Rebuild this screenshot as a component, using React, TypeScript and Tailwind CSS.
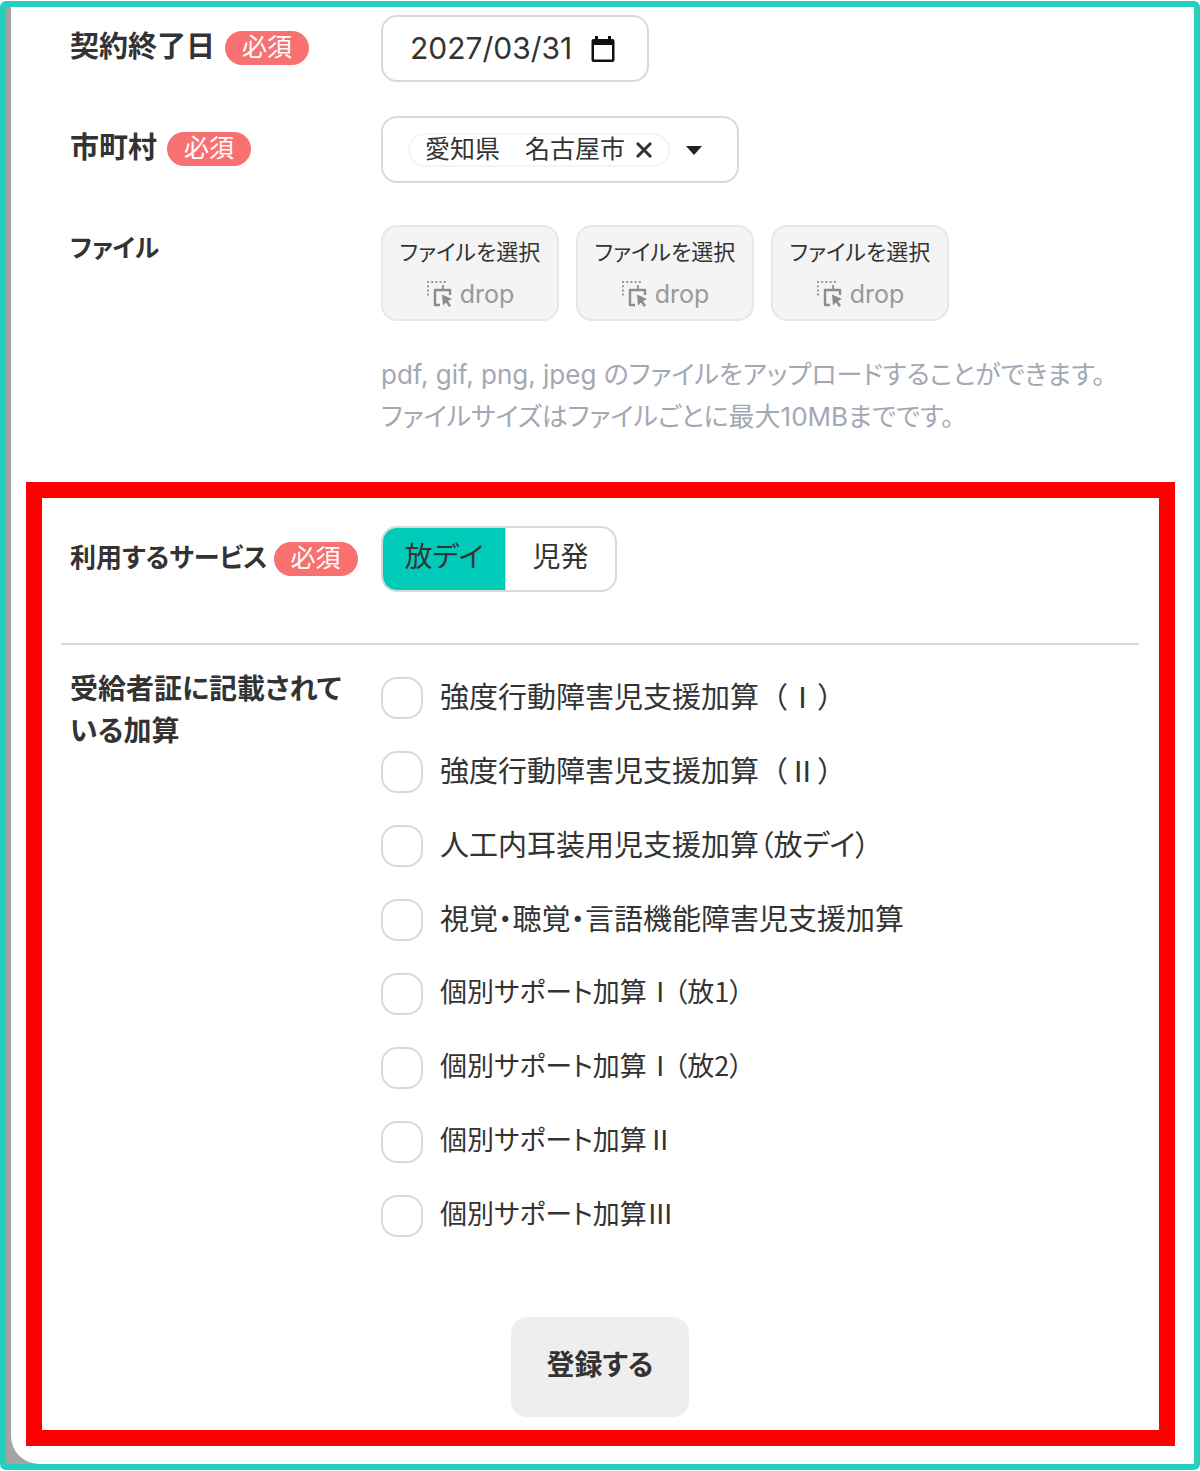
import { useState } from "react";

const additions = [
  { name: "強度行動障害児支援加算（Ⅰ）", style: "text-[29px] [font-feature-settings:normal]" },
  { name: "強度行動障害児支援加算（Ⅱ）", style: "text-[29px] [font-feature-settings:normal]" },
  { name: "人工内耳装用児支援加算（放デイ）", style: "text-[29px]" },
  { name: "視覚・聴覚・言語機能障害児支援加算", style: "text-[29px]" },
  { name: "個別サポート加算Ⅰ（放1）", style: "text-[27px]" },
  { name: "個別サポート加算Ⅰ（放2）", style: "text-[27px]" },
  { name: "個別サポート加算Ⅱ", style: "text-[27px]" },
  { name: "個別サポート加算Ⅲ", style: "text-[27px]" },
];

const services = ["放デイ", "児発"];

function Required() {
  return (
    <span className="flex h-[34px] shrink-0 items-center rounded-full bg-[#f87171] px-[17px] pb-0.5 text-[25px] font-normal whitespace-nowrap text-white">
      必須
    </span>
  );
}

function CalendarIcon() {
  return (
    <svg viewBox="0 0 24 28" className="h-7 w-6" aria-hidden="true">
      <path
        fill="#111"
        fillRule="evenodd"
        d="M4 1h3v3h10V1h3v3h1.500a2 2 0 0 1 2 2v19a2 2 0 0 1-2 2h-19a2 2 0 0 1-2-2V6a2 2 0 0 1 2-2H4zM3 10v14.500h18V10z"
      />
    </svg>
  );
}

function DropIcon() {
  return (
    <svg viewBox="0 0 26 28" className="h-7 w-[26px]" fill="none" aria-hidden="true">
      <path d="M1 2h19" stroke="#999" strokeWidth="2" strokeDasharray="2 2.200" />
      <path d="M2 5.200v12" stroke="#999" strokeWidth="2" strokeDasharray="2 2.200" />
      <path d="M17 5v4" stroke="#999" strokeWidth="2" />
      <path d="M14 25H9V10h15v5" stroke="#8c8c8c" strokeWidth="2.400" strokeLinejoin="round" />
      <path d="M16 14.500l10 4.500-4 2 3 4.500-2 1.500-3-4.500-3 3z" fill="#8c8c8c" />
    </svg>
  );
}

function FileDrop({ id }: { id: string }) {
  return (
    <label
      htmlFor={id}
      className="flex h-24 w-[178px] cursor-pointer flex-col items-center rounded-2xl border-2 border-gray-200 bg-[#f4f4f4] pt-1 leading-[42px]"
    >
      <input id={id} type="file" className="sr-only" />
      <span className="text-[22px] whitespace-nowrap">ファイルを選択</span>
      <span className="flex items-center gap-2 text-[25px] text-[#999]">
        <DropIcon />
        drop
      </span>
    </label>
  );
}

export default function App() {
  const [date, setDate] = useState("2027/03/31");
  const [service, setService] = useState("放デイ");

  return (
    <div className="bg-white py-px text-[29px] leading-[42px] text-[#333] [font-family:Inter,'Noto_Sans_CJK_JP',sans-serif] [font-feature-settings:'palt']">
      <div className="rounded-md border-6 border-[#26cfbd] bg-[#a3a3a3] pl-[5px]">
        <form className="rounded-bl-[28px] bg-white pt-2 pr-[19px] pb-[18px] pl-[15px]">
          <div className="grid grid-cols-[311px_1fr] pl-11">
            <div className="flex items-start gap-2.5 pt-4 leading-[32px] font-bold">
              <label htmlFor="end-date">契約終了日</label>
              <Required />
            </div>
            <div className="flex h-[67px] w-[268px] items-center rounded-2xl border-2 border-[#d9d9d9] pl-[27px]">
              <input
                id="end-date"
                type="text"
                value={date}
                onChange={(e) => setDate(e.target.value)}
                className="w-[181px] pb-0.5 text-[30px] outline-none"
              />
              <button type="button" aria-label="カレンダー">
                <CalendarIcon />
              </button>
            </div>
          </div>

          <div className="mt-[34px] grid grid-cols-[311px_1fr] pl-11">
            <div className="flex items-start gap-2.5 pt-4 leading-[32px] font-bold">
              <span id="city">市町村</span>
              <Required />
            </div>
            <div
              aria-labelledby="city"
              role="group"
              className="flex h-[67px] w-[358px] items-center rounded-2xl border-2 border-[#d9d9d9] pl-[25px]"
            >
              <span className="flex h-[34px] w-[262px] items-center rounded-full border-2 border-gray-100 pl-[15px] text-[25px]">
                <span className="w-[202px] pb-0.5 whitespace-nowrap">愛知県　名古屋市</span>
                <button type="button" aria-label="削除" className="ml-2">
                  <svg viewBox="0 0 18 18" className="size-[18px]" aria-hidden="true">
                    <path d="M2 2l14 14M16 2L2 16" stroke="#333" strokeWidth="3" />
                  </svg>
                </button>
              </span>
              <button type="button" aria-label="市町村を選択" className="ml-4">
                <svg viewBox="0 0 16 10" className="h-2.5 w-4" aria-hidden="true">
                  <path d="M0 1h16L8 10z" fill="#222" />
                </svg>
              </button>
            </div>
          </div>

          <div className="mt-[42px] grid grid-cols-[311px_1fr] pl-11">
            <div className="pt-0.5 text-[25px] font-bold">ファイル</div>
            <div>
              <div className="flex gap-[17px]">
                <FileDrop id="file-1" />
                <FileDrop id="file-2" />
                <FileDrop id="file-3" />
              </div>
              <p className="mt-[33px] text-[26px] text-[#a3a8b4]">
                pdf, gif, png, jpeg のファイルをアップロードすることができます。
                <br />
                ファイルサイズはファイルごとに最大10MBまでです。
              </p>
            </div>
          </div>

          <section className="mt-11 border-[16px] border-[#ff0000] pt-7 pr-5 pb-[13px] pl-[19px]">
            <div className="grid grid-cols-[311px_1fr] pl-[9px]">
              <div className="flex items-start gap-1.5 pt-4 leading-[32px] font-bold">
                <span id="service" className="text-[26px] whitespace-nowrap">
                  利用するサービス
                </span>
                <Required />
              </div>
              <div
                role="radiogroup"
                aria-labelledby="service"
                className="flex h-[66px] w-[236px] overflow-hidden rounded-2xl border-2 border-[#d9d9d9] text-[28px]"
              >
                {services.map((name) => (
                  <label
                    key={name}
                    className="flex grow cursor-pointer items-center justify-center border-[#d9d9d9] pb-1 not-first:border-l first:w-[122px] first:grow-0 has-checked:bg-[#00cbb9]"
                  >
                    <input
                      type="radio"
                      name="service"
                      value={name}
                      checked={service === name}
                      onChange={() => setService(name)}
                      className="sr-only"
                    />
                    {name}
                  </label>
                ))}
              </div>
            </div>

            <hr className="mt-[51px] border-t-2 border-[#d9d9d9]" />

            <div className="mt-[23px] grid grid-cols-[311px_1fr] pl-[9px]">
              <div className="pr-8 text-[28px] font-bold">受給者証に記載されている加算</div>
              <div className="flex flex-col gap-8 pt-[9px] [font-family:'Noto_Sans_CJK_JP',sans-serif]">
                {additions.map(({ name, style }) => (
                  <label key={name} className="flex h-[42px] items-center gap-[17px]">
                    <input
                      type="checkbox"
                      className="size-[42px] shrink-0 appearance-none rounded-2xl border-2 border-[#d9d9d9] checked:bg-[#00cbb9]"
                    />
                    <span className={`pb-1.5 ${style}`}>{name}</span>
                  </label>
                ))}
              </div>
            </div>

            <div className="mt-20 flex justify-center">
              <button
                type="submit"
                className="h-[100px] w-[178px] rounded-2xl bg-[#eee] pb-1 text-[28px] font-bold"
              >
                登録する
              </button>
            </div>
          </section>
        </form>
      </div>
    </div>
  );
}
